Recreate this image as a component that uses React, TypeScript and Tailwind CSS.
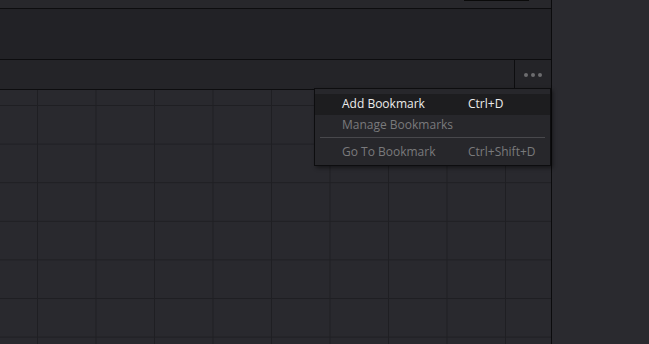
import React from 'react';

type Item = { label: string; shortcut?: string; disabled?: boolean; active?: boolean };

const items: (Item | 'sep')[] = [
  { label: 'Add Bookmark', shortcut: 'Ctrl+D', active: true },
  { label: 'Manage Bookmarks', disabled: true },
  'sep',
  { label: 'Go To Bookmark', shortcut: 'Ctrl+Shift+D', disabled: true },
];

function BookmarkMenu() {
  return (
    <div className="absolute left-[314px] top-[88px] w-[237px] bg-[#27272b] border border-[#0d0d0f] pt-[5px] pb-[2px] shadow-[2px_2px_4px_rgba(0,0,0,0.45)] z-10">
      {items.map((it, i) =>
        it === 'sep' ? (
          <div key={i} className="pt-px pb-[4px] px-[5px]">
            <div className="h-px bg-[#48484c]" />
          </div>
        ) : (
          <div
            key={i}
            className={
              'flex h-[21px] items-start pl-[27px] text-[12px] leading-[19px] ' +
              (it.active ? 'bg-[#1d1d1f] text-[#ececec]' : '') +
              (it.disabled ? ' text-[#7a7a7c]' : '')
            }
          >
            <span className="w-[126px] whitespace-nowrap">{it.label}</span>
            {it.shortcut && <span className="whitespace-nowrap">{it.shortcut}</span>}
          </div>
        )
      )}
    </div>
  );
}

export default function App() {
  return (
    <div className="w-[649px] h-[344px] flex overflow-hidden bg-[#2a2a2f] font-['Open_Sans','Noto_Sans',sans-serif]">
      {/* main column */}
      <div className="relative w-[552px] h-full flex flex-col border-r border-[#0b0b0d]">
        {/* top strip */}
        <div className="h-[9px] flex justify-end items-start pr-[22px] bg-[#27272b] border-b border-[#0d0d0f]">
          <div className="w-[65px] h-px bg-[#0a0a0a]" />
        </div>

        {/* empty panel */}
        <div className="h-[51px] bg-[#222226] border-b border-[#0d0d0f]" />

        {/* toolbar */}
        <div className="h-[30px] flex bg-[#242428] border-b border-[#0d0d0f]">
          <div className="flex-1" />
          <div className="w-[37px] flex items-center justify-center gap-[3px] border-l border-[#0d0d0f]">
            <span className="w-[4px] h-[4px] rounded-full bg-[#6c6c6e]" />
            <span className="w-[4px] h-[4px] rounded-full bg-[#6c6c6e]" />
            <span className="w-[4px] h-[4px] rounded-full bg-[#6c6c6e]" />
          </div>
        </div>

        {/* grid canvas */}
        <div className="flex-1 bg-[#29292e] bg-[linear-gradient(to_right,#1f1f23_1px,transparent_1px),linear-gradient(to_bottom,#1f1f23_1px,transparent_1px)] bg-[size:58.5px_38.6px] bg-[position:37px_15px]" />

        <BookmarkMenu />
      </div>

      {/* right panel */}
      <div className="flex-1 bg-[#2a2a2f]" />
    </div>
  );
}
